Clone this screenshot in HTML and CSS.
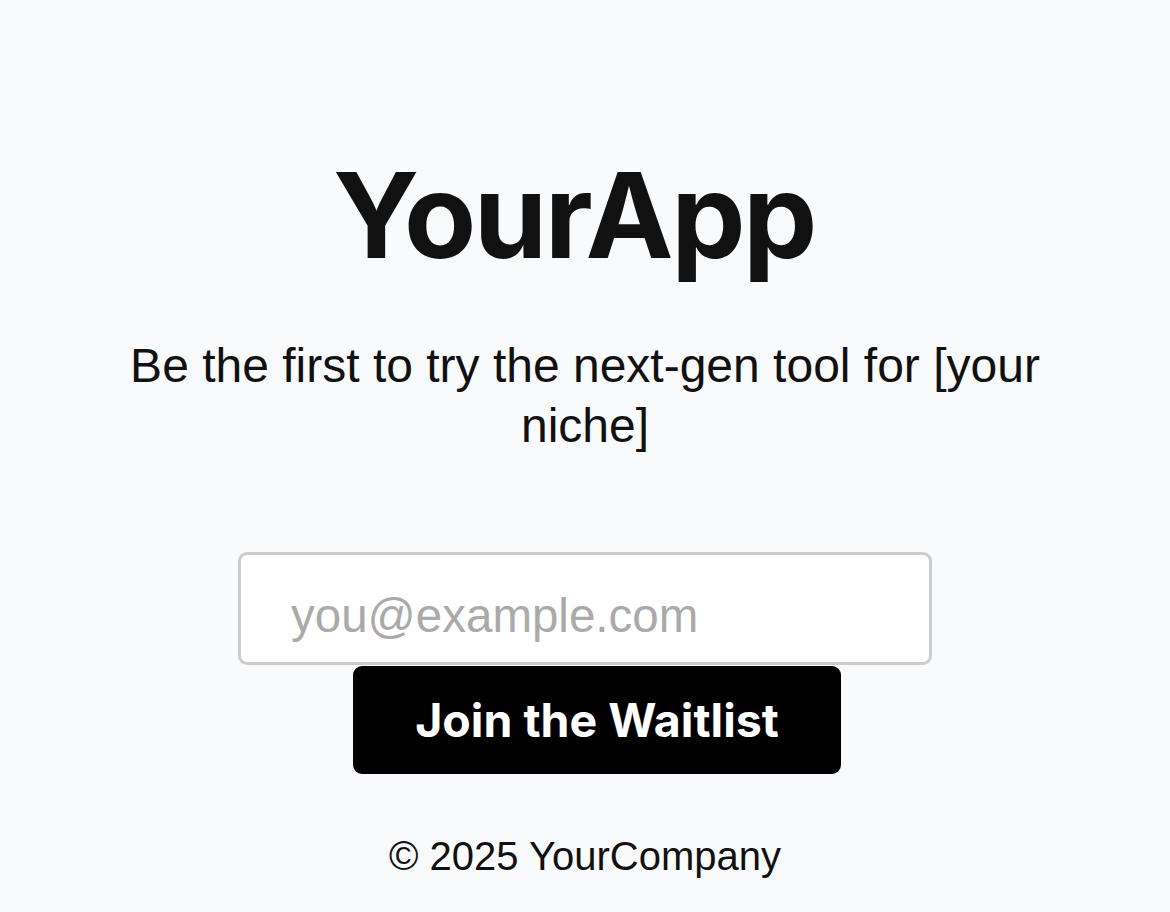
FILE: index.html
```html
<!DOCTYPE html>
<html lang="en">
<head>
<meta charset="utf-8">
<title>YourApp</title>
<link rel="stylesheet" href="styles.css">
</head>
<body>
<main class="page">
  <h1 class="title">YourApp</h1>
  <p class="tagline">Be the first to try the next-gen tool for [your niche]</p>
  <form class="signup">
    <input class="email" type="email" placeholder="you@example.com">
    <button class="cta" type="button">Join the Waitlist</button>
  </form>
  <footer class="footer">© 2025 YourCompany</footer>
</main>
</body>
</html>
```
FILE: styles.css
```css
html, body {
  margin: 0;
  padding: 0;
  background: #f9fafb;
}
.page {
  display: flex;
  flex-direction: column;
  align-items: center;
  padding: 144px 80px 0;
  text-align: center;
  color: #111111;
  font-family: "Liberation Sans", Arial, sans-serif;
}
.title {
  margin: 0;
  padding-right: 22px;
  font-family: Inter, "Liberation Sans", sans-serif;
  font-weight: 700;
  font-size: 118px;
  letter-spacing: -2.5px;
  line-height: normal;
  color: #111111;
}
.tagline {
  margin: 50px 0 0;
  font-size: 48px;
  line-height: 60px;
  color: #111111;
}
.signup {
  margin-top: 96px;
  display: flex;
  flex-direction: column;
  align-items: center;
}
.email {
  box-sizing: border-box;
  width: 694px;
  height: 113px;
  padding: 14px 50px 0;
  border: 3px solid #cccccc;
  border-radius: 9px;
  background: #ffffff;
  font-family: "Liberation Sans", Arial, sans-serif;
  font-size: 47.5px;
  color: #111111;
  outline: none;
}
.email::placeholder {
  color: #aaaaaa;
}
.cta {
  box-sizing: border-box;
  width: 488px;
  height: 108px;
  margin: 1px 0 0 24px;
  padding: 0;
  border: none;
  border-radius: 9px;
  background: #000000;
  color: #ffffff;
  font-family: Inter, "Liberation Sans", sans-serif;
  font-weight: 700;
  font-size: 46.5px;
  cursor: pointer;
}
.footer {
  margin-top: 60px;
  font-size: 40px;
  line-height: normal;
  color: #111111;
}
```
